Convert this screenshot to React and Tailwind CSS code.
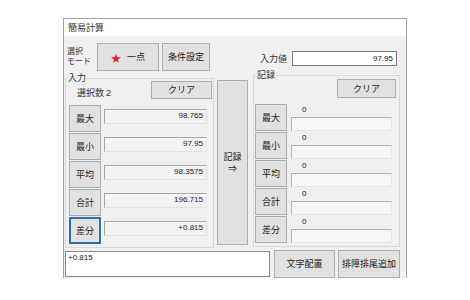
const jp = { fontFamily: '"Noto Sans CJK JP", "Noto Sans", sans-serif' };
const num = { fontFamily: '"Liberation Sans", Arial, sans-serif' };

const Btn = ({ className = "", focused = false, children }) => (
  <div
    className={`flex items-center justify-center bg-[#e1e1e1] text-[9px] text-[#222] ${
      focused ? "border-2 border-[#2f6fa6]" : "border border-[#adadad]"
    } ${className}`}
  >
    {children}
  </div>
);

const leftRows = [
  ["最大", "98.765"],
  ["最小", "97.95"],
  ["平均", "98.3575"],
  ["合計", "196.715"],
  ["差分", "+0.815"],
];

const rightRows = ["最大", "最小", "平均", "合計", "差分"];

export default function App() {
  return (
    <div className="w-[470px] h-[300px] bg-white overflow-hidden" style={jp}>
      <div className="ml-[63px] mt-[18px] w-[344px] h-[260px] border border-[#a3a3a3] flex flex-col">
        {/* title */}
        <div className="h-[17px] bg-white pl-[4px] text-[9px] leading-[17px] text-[#333]">簡易計算</div>

        <div className="flex-1 bg-[#f0f0f0] flex flex-col">
          {/* top row */}
          <div className="h-[38px] flex items-start">
            <div className="ml-[3px] mt-[10px] w-[30px] text-[8px] leading-[10px] text-[#333]">
              <div>選択</div>
              <div>モード</div>
            </div>
            <Btn className="mt-[7px] w-[62px] h-[28px] gap-[6px]">
              <span className="text-[#e02020] text-[10px]">★</span>
              <span>一点</span>
            </Btn>
            <Btn className="mt-[7px] ml-[3px] w-[48px] h-[28px]">条件設定</Btn>
            <div className="ml-[50px] mt-[15px] flex items-center">
              <div className="w-[32px] text-[9px] text-[#333]">入力値</div>
              <div
                className="w-[105px] h-[15px] bg-white border border-[#7a7a7a] text-right pr-[3px] text-[8px] leading-[13px] text-[#222]"
                style={num}
              >
                97.95
              </div>
            </div>
          </div>

          {/* middle */}
          <div className="flex items-start">
            {/* left group */}
            <div className="ml-[1px] mt-[4px] w-[149px] border border-[#d8d8d8] pb-[3px]">
              <span className="block w-fit ml-[1px] -mt-[7px] px-[1px] bg-[#f0f0f0] text-[9px] leading-[12px] text-[#333]">
                入力
              </span>
              <div className="-mt-[3px] h-[18px] flex items-start">
                <div className="ml-[11px] mt-[6px] text-[9px] leading-[12px] text-[#333]">
                  選択数 <span style={num}>2</span>
                </div>
                <Btn className="ml-auto mr-[1px] w-[61px] h-[18px]">クリア</Btn>
              </div>
              <div className="mt-[6px] flex flex-col gap-[1px]">
                {leftRows.map(([label, value], i) => (
                  <div key={label} className="flex items-start">
                    <Btn focused={i === 4} className="ml-[3px] w-[32px] h-[27px]">
                      {label}
                    </Btn>
                    <div
                      className="ml-[3px] mt-[4px] w-[103px] h-[15px] bg-[#f3f3f3] border border-t-[#a8a8a8] border-l-[#a8a8a8] border-r-[#e2e2e2] border-b-[#e2e2e2] text-right pr-[3px] text-[8px] leading-[11px] text-[#222]"
                      style={num}
                    >
                      {value}
                    </div>
                  </div>
                ))}
              </div>
            </div>

            {/* record button */}
            <Btn className="ml-[3px] mt-[6px] w-[31px] h-[165px] flex-col gap-[1px]">
              <span className="leading-[11px]">記録</span>
              <span className="text-[9px] leading-[11px]">⇒</span>
            </Btn>

            {/* right group */}
            <div className="ml-[5px] mt-[1px] w-[147px] border border-[#d8d8d8] pb-[3px]">
              <span className="block w-fit ml-[2px] -mt-[7px] px-[1px] bg-[#f0f0f0] text-[9px] leading-[12px] text-[#333]">
                記録
              </span>
              <div className="-mt-[2px] h-[19px] flex">
                <Btn className="ml-auto mr-[3px] w-[59px] h-[19px]">クリア</Btn>
              </div>
              <div className="mt-[6px] flex flex-col gap-[1px]">
                {rightRows.map((label) => (
                  <div key={label} className="flex items-start">
                    <Btn className="ml-[1px] w-[32px] h-[27px]">{label}</Btn>
                    <div className="ml-[4px] w-[101px] flex flex-col">
                      <div className="pl-[11px] h-[13px] text-[8px] leading-[11px] text-[#222]" style={num}>
                        0
                      </div>
                      <div className="h-[14px] bg-[#f6f6f6] border border-t-[#b4b4b4] border-l-[#b4b4b4] border-r-[#e6e6e6] border-b-[#e6e6e6]" />
                    </div>
                  </div>
                ))}
              </div>
            </div>
          </div>

          {/* bottom */}
          <div className="mt-[2px] flex items-start">
            <div
              className="ml-[1px] mt-[1px] w-[205px] h-[26px] bg-white border border-[#8a8a8a] pl-[2px] text-[8px] leading-[12px] text-[#222]"
              style={num}
            >
              +0.815
            </div>
            <Btn className="ml-[4px] w-[61px] h-[28px]">文字配置</Btn>
            <Btn className="ml-[3px] w-[62px] h-[28px]">排障排尾追加</Btn>
          </div>
        </div>
      </div>
    </div>
  );
}
